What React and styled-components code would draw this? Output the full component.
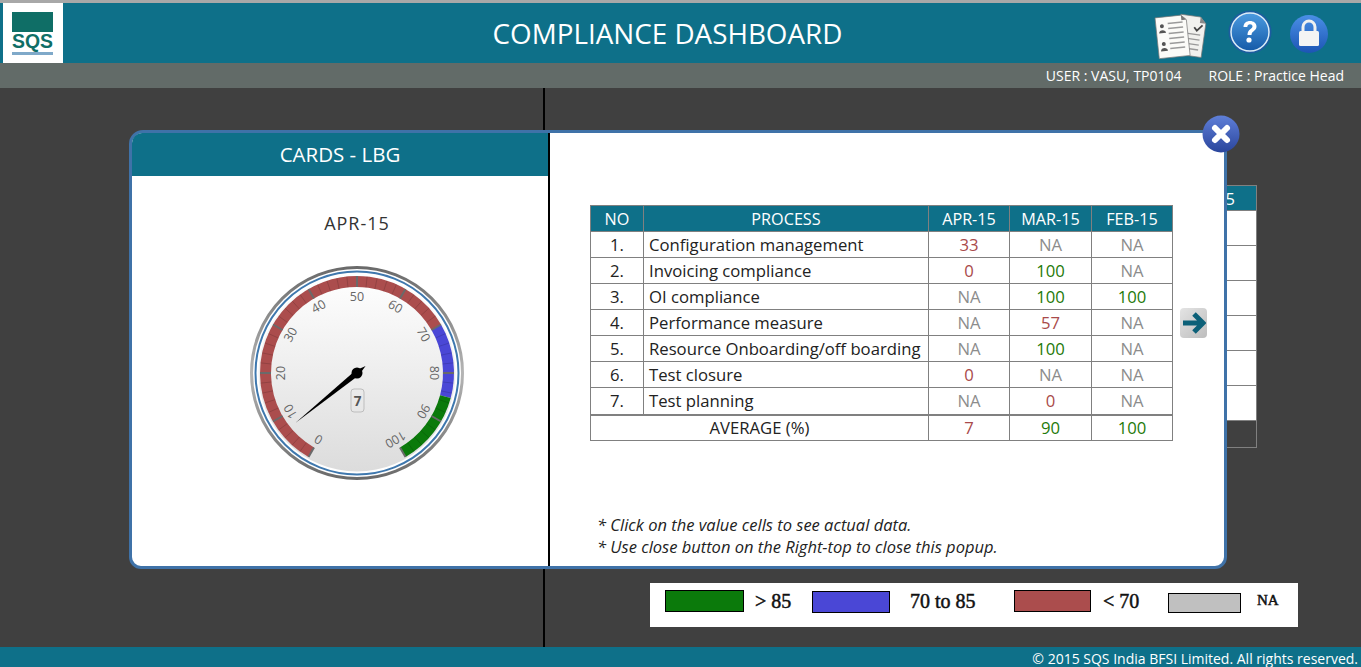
import React from "react";
import styled, { createGlobalStyle } from "styled-components";

const TEAL = "#0e7089";
const RED = "#ab4d4d";
const BLUE = "#4a47d6";
const GREEN = "#0b7a0b";
const FONT = `"Open Sans", "Noto Sans", sans-serif`;

const Global = createGlobalStyle`
  * { box-sizing: border-box; }
  html, body { margin: 0; padding: 0; background: #404040; }
  body { font-family: ${FONT}; }
`;

const Page = styled.div`
  position: relative;
  width: 1361px;
  height: 667px;
  overflow: hidden;
  display: flex;
  flex-direction: column;
  border-top: 3px solid #a8a8a8;
`;

const Header = styled.header`
  height: 60px;
  background: ${TEAL};
  display: flex;
  padding-left: 3px;
`;

const LogoBox = styled.div`
  width: 60px;
  height: 60px;
  background: #fff;
  flex: none;
`;

const Title = styled.h1`
  flex: 1;
  margin: 0;
  padding-left: 118px;
  text-align: center;
  color: #fff;
  font-size: 27.8px;
  font-weight: 400;
  line-height: 60px;
  white-space: nowrap;
`;

const HeaderIcons = styled.div`
  width: 207px;
  flex: none;
  display: flex;
  align-items: flex-start;
`;

const InfoBar = styled.div`
  height: 25px;
  background: #626b68;
  color: #fff;
  font-size: 14px;
  line-height: 25px;
  display: flex;
  justify-content: flex-end;
  gap: 27px;
  padding-right: 17px;
`;

const Main = styled.main`
  flex: 1;
  display: flex;
  background: #404040;
`;

const LeftSide = styled.div`
  width: 545px;
  flex: none;
  border-right: 2px solid #000;
`;

const RightSide = styled.div`
  flex: 1;
  padding-top: 97px;
  display: flex;
  flex-direction: column;
`;

const BackTable = styled.table`
  align-self: flex-end;
  margin-right: 104px;
  width: 300px;
  height: 262px;
  border-collapse: collapse;
  background: #fff;
  font-size: 16.5px;
  th {
    height: 25px;
    padding: 0 21px 0 0;
    background: ${TEAL};
    color: #fff;
    font-weight: 400;
    text-align: right;
    border: 1px solid #808080;
  }
  td { height: 35px; border: 1px solid #808080; }
  tr:last-child td { height: 27px; background: #404040; }
`;

const Legend = styled.div`
  margin: 135px 0 0 105px;
  width: 648px;
  height: 44px;
  background: #fff;
  display: flex;
  align-items: flex-start;
  padding: 7px 0 0 15px;
  font-family: "Liberation Serif", serif;
  color: #111;
`;

const Swatch = styled.span`
  flex: none;
  width: ${(p) => p.$w}px;
  height: ${(p) => p.$h || 22}px;
  margin-top: ${(p) => p.$top || 0}px;
  background: ${(p) => p.$color};
  border: 1px solid #000;
`;

const LegendText = styled.span`
  flex: none;
  width: ${(p) => p.$w}px;
  padding-left: ${(p) => p.$pad}px;
  font-size: ${(p) => p.$size || 20}px;
  line-height: 22px;
  margin-top: ${(p) => p.$top || 0}px;
  font-weight: 400;
  -webkit-text-stroke: 0.5px #111;
  white-space: nowrap;
`;

const Footer = styled.footer`
  height: 20px;
  padding: 4px 3px 0 0;
  background: ${TEAL};
  color: #fff;
  font-size: 14px;
  line-height: 16px;
  text-align: right;
  white-space: nowrap;
`;

const Modal = styled.section`
  position: absolute;
  left: 129px;
  top: 127px;
  width: 1098px;
  height: 439px;
  background: #fff;
  border: 3px solid #3f72a8;
  border-radius: 14px 0 12px 12px;
  display: flex;
`;

const ChartPane = styled.div`
  width: 418px;
  flex: none;
  border-right: 2px solid #000;
  display: flex;
  flex-direction: column;
`;

const PaneTitle = styled.h2`
  margin: 0;
  height: 43px;
  background: ${TEAL};
  border-top-left-radius: 10px;
  color: #fff;
  font-size: 20.5px;
  font-weight: 500;
  line-height: 43px;
  text-align: center;
`;

const ChartBody = styled.div`
  flex: 1;
  padding: 33px 0 0 34px;
  display: flex;
  flex-direction: column;
  align-items: center;
`;

const Month = styled.div`
  color: #333;
  font-size: 18px;
  line-height: 28px;
  letter-spacing: 1px;
  margin-bottom: 26px;
`;

const DetailPane = styled.div`
  flex: 1;
  padding: 72px 0 0 40px;
  display: flex;
  flex-direction: column;
`;

const TableRow = styled.div`
  display: flex;
  align-items: center;
  gap: 7px;
`;

const Grid = styled.table`
  width: 582px;
  table-layout: fixed;
  border-collapse: collapse;
  font-size: 16.7px;
  color: #222;
  th {
    height: 26px;
    padding: 0;
    background: ${TEAL};
    color: #fff;
    font-size: 16.2px;
    font-weight: 400;
    border: 1px solid #808080;
  }
  td {
    height: 26px;
    padding: 0;
    border: 1px solid #808080;
    text-align: center;
  }
  tbody tr:last-child td { height: 27px; }
  tfoot td { border-top-width: 2px; }
`;

const ProcessCell = styled.td`
  && { text-align: left; padding-left: 5px; white-space: nowrap; }
`;

const Value = styled.td`
  && {
    color: ${(p) => (p.$v === "NA" ? "#8c8c8c" : Number(p.$v) > 85 ? "#1f7a0a" : "#a94a4a")};
  }
`;

const NextButton = styled.button`
  width: 27px;
  height: 30px;
  padding: 0;
  border: none;
  border-radius: 4px;
  background: linear-gradient(135deg, #e4e4e4, #bdbdbd);
  display: flex;
  align-items: center;
  justify-content: center;
`;

const Notes = styled.div`
  margin: 73px 0 0 7px;
  color: #222;
  font-size: 16.5px;
  font-style: italic;
  line-height: 22px;
  white-space: nowrap;
`;

const CloseButton = styled.button`
  position: absolute;
  left: 1069px;
  top: -19px;
  width: 40px;
  height: 40px;
  padding: 0;
  border: none;
  background: none;
`;

const months = ["APR-15", "MAR-15", "FEB-15"];
const rows = [
  ["Configuration management", "33", "NA", "NA"],
  ["Invoicing compliance", "0", "100", "NA"],
  ["OI compliance", "NA", "100", "100"],
  ["Performance measure", "NA", "57", "NA"],
  ["Resource Onboarding/off boarding", "NA", "100", "NA"],
  ["Test closure", "0", "NA", "NA"],
  ["Test planning", "NA", "0", "NA"],
];
const average = ["7", "90", "100"];

function Logo() {
  return (
    <svg width="60" height="60" viewBox="0 0 60 60">
      <rect x="9" y="9" width="41" height="20" fill="#0f6e66" />
      <text x="29.5" y="45" textAnchor="middle" textLength="41" lengthAdjust="spacingAndGlyphs"
        fontFamily="Liberation Sans, sans-serif" fontWeight="700" fontSize="20" fill="#0f6e66">SQS</text>
      <rect x="9" y="49" width="41" height="3" fill="#7fa9c9" />
    </svg>
  );
}

function DocsIcon() {
  const lines = [8, 13, 18, 23, 28, 33];
  return (
    <svg width="54" height="48" viewBox="0 0 54 48" style={{ marginTop: 9 }}>
      <g transform="rotate(8 38 24)">
        <path d="M24 4h20l6 6v34H24z" fill="#f1f1ee" stroke="#777" strokeWidth="0.7" />
        <path d="M44 4v6h6z" fill="#888" />
        <path d="M39 15l3 3 5-6" fill="none" stroke="#444" strokeWidth="1.8" />
        {[22, 27, 32, 37].map((y) => <path key={y} d="M30 0h16" transform={`translate(0 ${y})`} stroke="#999" strokeWidth="1.3" />)}
      </g>
      <g transform="rotate(-6 20 24)">
        <path d="M3 4h26l5 5v36H3z" fill="#fbfbf8" stroke="#777" strokeWidth="0.7" />
        <path d="M29 4v5h5z" fill="#777" />
        {lines.map((y) => <path key={y} d={`M15 ${y + 3}h15`} stroke="#9a9a9a" strokeWidth="1.5" />)}
        <circle cx="9" cy="13" r="2" fill="#555" />
        <path d="M5.5 20c0-4 7-4 7 0z" fill="#555" />
        <circle cx="9" cy="31" r="2" fill="#555" />
        <path d="M5.5 38c0-4 7-4 7 0z" fill="#555" />
      </g>
    </svg>
  );
}

function HelpIcon() {
  return (
    <svg width="44" height="44" viewBox="0 0 44 44" style={{ marginLeft: 20, marginTop: 7 }}>
      <defs>
        <linearGradient id="helpFill" x1="0" y1="0" x2="0" y2="1">
          <stop offset="0" stopColor="#4b9be0" />
          <stop offset="1" stopColor="#155aa8" />
        </linearGradient>
      </defs>
      <circle cx="22" cy="22" r="21.5" fill="#1c5c9f" />
      <circle cx="22" cy="22" r="19" fill="url(#helpFill)" stroke="#dcecf8" strokeWidth="1.5" />
      <path d="M15.5 17c0-4 3-6 6.5-6s6.5 2.200 6.500 5.500c0 4.500-5 4.500-5 8.500h-4c0-6 5-6 5-8.500 0-1.300-1-2.200-2.500-2.200s-2.600 1-2.700 2.700z" fill="#fff" />
      <circle cx="21" cy="30" r="2.600" fill="#fff" />
    </svg>
  );
}

function LockIcon() {
  return (
    <svg width="40" height="40" viewBox="0 0 40 40" style={{ marginLeft: 17, marginTop: 11 }}>
      <defs>
        <linearGradient id="lockFill" x1="0" y1="0" x2="0" y2="1">
          <stop offset="0" stopColor="#4a8fe6" />
          <stop offset="1" stopColor="#1c55b4" />
        </linearGradient>
      </defs>
      <circle cx="20" cy="20" r="19" fill="url(#lockFill)" />
      <path d="M14 17v-4a6 6 0 0 1 12 0v4" fill="none" stroke="#f0f0f0" strokeWidth="3" />
      <rect x="10" y="17" width="20" height="15" rx="1.500" fill="#f4f4f4" />
    </svg>
  );
}

function CloseIcon() {
  return (
    <svg width="40" height="40" viewBox="0 0 40 40">
      <defs>
        <linearGradient id="closeFill" x1="0" y1="0" x2="0" y2="1">
          <stop offset="0" stopColor="#5f7fd8" />
          <stop offset="1" stopColor="#2a459c" />
        </linearGradient>
      </defs>
      <circle cx="20" cy="20" r="18.500" fill="url(#closeFill)" />
      <path d="M14 14l12 12M26 14l-12 12" stroke="#fff" strokeWidth="6" strokeLinecap="round" />
    </svg>
  );
}

function ArrowIcon() {
  return (
    <svg width="24" height="24" viewBox="0 0 24 24">
      <path d="M1 12h20M12 3l9 9-9 9" fill="none" stroke="#0c6078" strokeWidth="5" />
    </svg>
  );
}

// gauge: 0 sits 150deg left of top, 100 sits 150deg right, so 3deg per unit
const C = 110;
const polar = (r, value) => {
  const a = ((value * 3 - 150) * Math.PI) / 180;
  return [C + r * Math.sin(a), C - r * Math.cos(a)];
};
const arc = (r, from, to) => {
  const [x1, y1] = polar(r, from);
  const [x2, y2] = polar(r, to);
  return `M${x1} ${y1}A${r} ${r} 0 ${to - from > 60 ? 1 : 0} 1 ${x2} ${y2}`;
};

function Gauge({ value }) {
  const ticks = Array.from({ length: 51 }, (_, i) => i * 2);
  const labels = Array.from({ length: 11 }, (_, i) => i * 10);
  const [nx, ny] = polar(79, value);
  const [tx, ty] = polar(-11, value);
  const [sx, sy] = polar(3, value + 30);
  const [ex, ey] = polar(3, value - 30);
  return (
    <svg width="220" height="220" viewBox="0 0 220 220">
      <defs>
        <linearGradient id="face" x1="0" y1="0" x2="0" y2="1">
          <stop offset="0" stopColor="#ffffff" />
          <stop offset="1" stopColor="#dcdcdc" />
        </linearGradient>
        <linearGradient id="rim" x1="0" y1="0" x2="0" y2="1">
          <stop offset="0" stopColor="#6a6a6a" />
          <stop offset="0.5" stopColor="#b5b5b5" />
          <stop offset="1" stopColor="#6a6a6a" />
        </linearGradient>
      </defs>
      <circle cx={C} cy={C} r="105.500" fill="#fff" stroke="url(#rim)" strokeWidth="3" />
      <circle cx={C} cy={C} r="101.500" fill="none" stroke="#3f78ae" strokeWidth="2" />
      <circle cx={C} cy={C} r="98.500" fill="url(#face)" />
      <path d={arc(91.500, 0, 70)} fill="none" stroke={RED} strokeWidth="11" />
      <path d={arc(91.500, 70, 85)} fill="none" stroke={BLUE} strokeWidth="11" />
      <path d={arc(91.500, 85, 100)} fill="none" stroke={GREEN} strokeWidth="11" />
      {ticks.map((t) => {
        const major = t % 10 === 0;
        const [x1, y1] = polar(86, t);
        const [x2, y2] = polar(97, t);
        return (
          <line key={t} x1={x1} y1={y1} x2={x2} y2={y2}
            stroke={major ? "#6a6a6a" : "#000"} strokeOpacity={major ? 1 : 0.14} strokeWidth={major ? 2 : 1} />
        );
      })}
      {labels.map((l) => {
        const [x, y] = polar(77, l);
        return (
          <text key={l} x={x} y={y} transform={`rotate(${l * 3 - 150} ${x} ${y})`} textAnchor="middle"
            dominantBaseline="central" fontFamily={FONT} fontSize="12.500" fill="#666">{l}</text>
        );
      })}
      <rect x="104" y="126" width="13" height="23" rx="3" fill="none" stroke="#bdbdbd" />
      <text x="110.500" y="142.500" textAnchor="middle" fontFamily={FONT} fontWeight="700" fontSize="13.500" fill="#555">{value}</text>
      <path d={`M${nx} ${ny}L${sx} ${sy}L${tx} ${ty}L${ex} ${ey}z`} fill="#000" />
      <circle cx={C} cy={C} r="5.500" fill="#000" />
    </svg>
  );
}

export default function App() {
  return (
    <Page>
      <Global />
      <Header>
        <LogoBox><Logo /></LogoBox>
        <Title>COMPLIANCE DASHBOARD</Title>
        <HeaderIcons>
          <DocsIcon />
          <HelpIcon />
          <LockIcon />
        </HeaderIcons>
      </Header>
      <InfoBar>
        <span>USER : VASU, TP0104</span>
        <span>ROLE : Practice Head</span>
      </InfoBar>
      <Main>
        <LeftSide />
        <RightSide>
          <BackTable>
            <thead><tr><th /><th>FEB-15</th></tr></thead>
            <tbody>
              {[0, 1, 2, 3, 4, 5, 6].map((i) => <tr key={i}><td /><td /></tr>)}
            </tbody>
          </BackTable>
          <Legend>
            <Swatch $color={GREEN} $w={79} />
            <LegendText $w={68} $pad={11}>&gt; 85</LegendText>
            <Swatch $color={BLUE} $w={78} $top={1} />
            <LegendText $w={124} $pad={20}>70 to 85</LegendText>
            <Swatch $color={RED} $w={77} />
            <LegendText $w={77} $pad={12}>&lt; 70</LegendText>
            <Swatch $color="#c0c0c0" $w={73} $h={20} $top={3} />
            <LegendText $w={60} $pad={16} $size={15} $top={-1}>NA</LegendText>
          </Legend>
        </RightSide>
      </Main>
      <Footer>© 2015 SQS India BFSI Limited. All rights reserved.</Footer>
      <Modal>
        <ChartPane>
          <PaneTitle>CARDS - LBG</PaneTitle>
          <ChartBody>
            <Month>APR-15</Month>
            <Gauge value={7} />
          </ChartBody>
        </ChartPane>
        <DetailPane>
          <TableRow>
            <Grid>
              <colgroup>
                <col width="53" /><col width="285" /><col width="81" /><col width="82" /><col width="81" />
              </colgroup>
              <thead>
                <tr>
                  <th>NO</th>
                  <th>PROCESS</th>
                  {months.map((m) => <th key={m}>{m}</th>)}
                </tr>
              </thead>
              <tbody>
                {rows.map(([name, ...vals], i) => (
                  <tr key={name}>
                    <td>{i + 1}.</td>
                    <ProcessCell>{name}</ProcessCell>
                    {vals.map((v, j) => <Value key={j} $v={v}>{v}</Value>)}
                  </tr>
                ))}
              </tbody>
              <tfoot>
                <tr>
                  <td colSpan="2">AVERAGE (%)</td>
                  {average.map((v, j) => <Value key={j} $v={v}>{v}</Value>)}
                </tr>
              </tfoot>
            </Grid>
            <NextButton aria-label="next"><ArrowIcon /></NextButton>
          </TableRow>
          <Notes>
            <div>* Click on the value cells to see actual data.</div>
            <div>* Use close button on the Right-top to close this popup.</div>
          </Notes>
        </DetailPane>
        <CloseButton aria-label="close"><CloseIcon /></CloseButton>
      </Modal>
    </Page>
  );
}
